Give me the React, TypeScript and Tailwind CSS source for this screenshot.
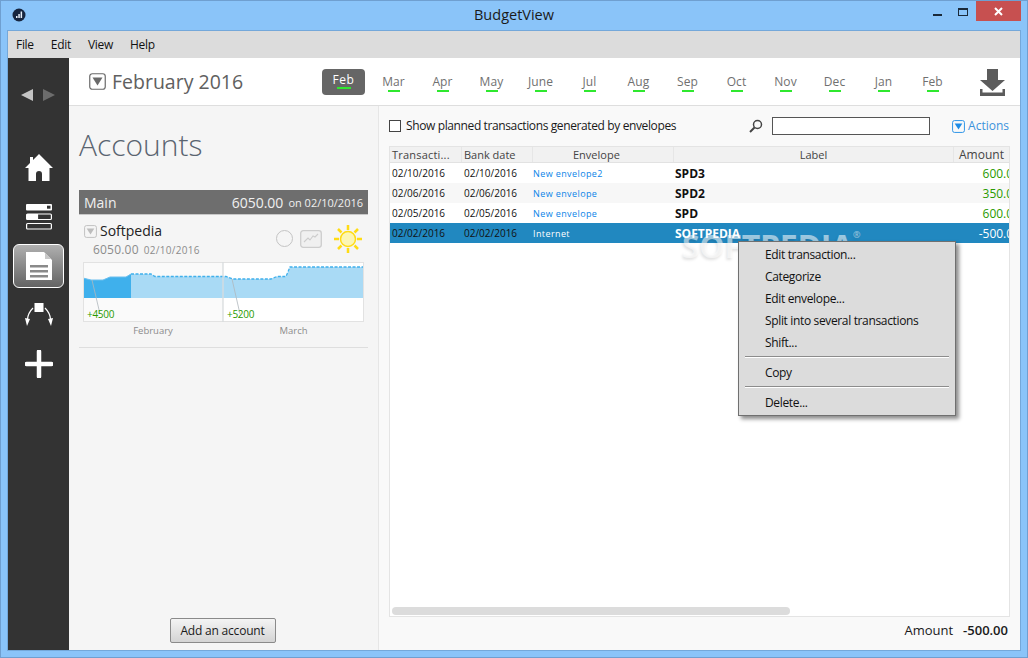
import React from "react";

const months = ["Mar","Apr","May","June","Jul","Aug","Sep","Oct","Nov","Dec","Jan","Feb"];
const rows = [
  { d: "02/10/2016", b: "02/10/2016", e: "New envelope2", l: "SPD3", a: "600.00", bg: "bg-white" },
  { d: "02/06/2016", b: "02/06/2016", e: "New envelope", l: "SPD2", a: "350.00", bg: "bg-[#f7f7f7]" },
  { d: "02/05/2016", b: "02/05/2016", e: "New envelope", l: "SPD", a: "600.00", bg: "bg-white" },
];

function DownBox({ className }: { className: string }) {
  return (
    <svg viewBox="0 0 17 17" className={className}>
      <rect x="0.75" y="0.75" width="15.5" height="15.5" rx="2.5" fill="none" stroke="currentColor" strokeWidth="1.2" />
      <path d="M3.5 4.5h10l-5 8z" fill="currentColor" />
    </svg>
  );
}

export default function App() {
  return (
    <div className="relative w-[1028px] h-[658px] flex flex-col bg-[#8ac4f9] border border-[#6f9fd0] overflow-hidden text-black font-['Open_Sans',sans-serif]">
      {/* Title bar */}
      <div className="relative h-[29px] shrink-0 flex items-center justify-center">
        <svg viewBox="0 0 14 14" className="absolute left-[11px] top-[7px] w-[14px] h-[14px]">
          <circle cx="7" cy="7" r="6.5" fill="#16253f" />
          <path d="M4 10V8h1.5v2zM6.3 10V6h1.5v4zM8.6 10V3.5h1.5V10z" fill="#e8f0fa" />
        </svg>
        <span className="text-[14.500px] leading-none text-[#1a1a1a]">BudgetView</span>
        <div className="absolute left-[932px] top-[13px] w-[9px] h-[2px] bg-[#1a2a3a]" />
        <div className="absolute left-[957px] top-[7px] w-[10px] h-[8px] border border-[#1a2a3a] border-t-2" />
        <div className="absolute left-[975px] top-0 w-[45px] h-[20px] bg-[#c75050] flex items-center justify-center">
          <svg viewBox="0 0 9 9" className="w-[9px] h-[9px]"><path d="M1 1l7 7M8 1l-7 7" stroke="#fff" strokeWidth="2" /></svg>
        </div>
      </div>

      {/* Client area */}
      <div className="flex-1 mx-[6px] mb-[6px] flex flex-col border border-[#74a8da] min-h-0">
        {/* Menu */}
        <div className="h-[27px] shrink-0 bg-[#dcdcdc] flex items-center pl-[8px] gap-[17px] text-[12px] tracking-[-0.3px] text-[#111]">
          <span>File</span><span>Edit</span><span>View</span><span>Help</span>
        </div>

        <div className="flex-1 flex min-h-0">
          {/* Sidebar */}
          <div className="w-[61px] shrink-0 bg-[#333333] flex flex-col items-center">
            <div className="h-[74px] flex items-center gap-[10px] pr-[1px]">
              <svg viewBox="0 0 12 12" className="w-[12px] h-[12px]"><path d="M12 0v12L0 6z" fill="#c4c4c4" /></svg>
              <svg viewBox="0 0 12 12" className="w-[12px] h-[12px]"><path d="M0 0v12l12-6z" fill="#6c6c6c" /></svg>
            </div>
            <div className="h-[11px]" />
            <div className="h-[49px] flex items-center justify-center">
              <svg viewBox="0 0 28 27" className="w-[28px] h-[27px]">
                <path d="M14 0L28 14h-3.5v13H17v-7a3 3 0 0 0-6 0v7H3.500V14H0L5 9V3h3v3z" fill="#fff" />
              </svg>
            </div>
            <div className="h-[49px] flex items-center justify-center">
              <svg viewBox="0 0 26 26" className="w-[26px] h-[26px]">
                <rect x="0" y="0" width="26" height="6.500" rx="1" fill="#fff" />
                <rect x="21" y="1.700" width="3.500" height="3" fill="#333" />
                <rect x="0.600" y="10" width="24.800" height="5.500" rx="1" fill="#333" stroke="#fff" strokeWidth="1.200" />
                <rect x="0.600" y="10" width="11.500" height="5.500" fill="#fff" />
                <rect x="0.600" y="19.500" width="24.800" height="5.500" rx="1" fill="none" stroke="#fff" strokeWidth="1.200" />
              </svg>
            </div>
            <div className="h-[49px] flex items-center justify-center">
              <div className="w-[51px] h-[44px] rounded-[6px] border border-white bg-gradient-to-b from-[#b0b0b0] to-[#646464] flex items-center justify-center">
                <svg viewBox="0 0 26 28" className="w-[26px] h-[28px]">
                  <path d="M0 0h18l8 8v20H0z" fill="#fff" />
                  <path d="M19 1l6 6h-6z" fill="#c8c8c8" />
                  <path d="M4 13h18v2.500H4zM4 18h18v2.500H4zM4 23h18v2.500H4z" fill="#8a8a8a" />
                </svg>
              </div>
            </div>
            <div className="h-[49px] flex items-center justify-center">
              <svg viewBox="0 0 28 24" className="w-[28px] h-[24px]">
                <rect x="9.500" y="0" width="9" height="9" fill="#fff" />
                <path d="M8 5C5 8 3 11 2.500 16M20 5c3 3 5 6 5.500 11" fill="none" stroke="#fff" strokeWidth="1.200" />
                <path d="M0 15l5 1-3 7zM28 15l-5 1 3 7z" fill="#fff" />
              </svg>
            </div>
            <div className="h-[49px] flex items-center justify-center">
              <svg viewBox="0 0 28 28" className="w-[28px] h-[28px]">
                <path d="M14 1.500v25M1.500 14h25" stroke="#fff" strokeWidth="4.500" strokeLinecap="round" />
              </svg>
            </div>
          </div>

          <div className="flex-1 flex flex-col min-w-0">
            {/* Header */}
            <div className="h-[48px] shrink-0 bg-white border-b border-[#dedede] flex items-center relative">
              <DownBox className="ml-[20px] w-[17px] h-[17px] text-[#6a6a6a]" />
              <span className="ml-[6px] w-[210px] pt-[1px] text-[19.500px] leading-none text-[#606060]">February 2016</span>
              <div className="w-[43px] h-[26px] mr-[4px] rounded-[4px] bg-[#666666] flex flex-col items-center pt-[3px] text-[12px] leading-[16px] text-white tracking-[0.5px]">
                <span>Feb</span>
                <span className="w-[14px] h-[2px] -mt-[0.5px] bg-[#2fe82f]" />
              </div>
              {months.map((m, i) => (
                <div key={i} className="w-[49px] shrink-0 flex flex-col items-center text-[12px] leading-[16px] text-[#707070] tracking-[0.1px] pt-[2px]">
                  <span>{m}</span>
                  <span className="w-[12px] h-[2px] bg-[#2fe82f]" />
                </div>
              ))}
              <svg viewBox="0 0 25 27" className="absolute right-[15px] top-[11px] w-[25px] h-[27px]">
                <path d="M7 0h11v11h7L12.500 22 0 11h7z" fill="#5c5c5c" />
                <path d="M0 20h2.500v3.500h20V20H25v7H0z" fill="#5c5c5c" />
              </svg>
            </div>

            <div className="flex-1 flex min-h-0">
              {/* Left panel */}
              <div className="w-[310px] shrink-0 bg-[#f5f5f5] border-r border-[#e6e6e6] px-[10px] flex flex-col">
                <div className="text-[30px] leading-[40px] font-light text-[#5a6470] mt-[19px]">Accounts</div>
                <div className="h-[25px] mt-[25px] bg-[#6e6e6e] border-b border-[#c8c8c8] text-[#f0f0f0] flex items-center px-[5px]">
                  <span className="text-[14px]">Main</span>
                  <span className="ml-auto text-[14px]">6050.00</span>
                  <span className="ml-[5px] text-[11px] pt-[2px]">on 02/10/2016</span>
                </div>
                <div className="h-[47px] relative flex flex-col">
                  <div className="flex items-center pl-[5px] pt-[6px]">
                    <DownBox className="w-[13px] h-[13px] text-[#bdbdbd]" />
                    <span className="ml-[3px] text-[14px] leading-[20px] text-[#222]">Softpedia</span>
                  </div>
                  <div className="pl-[14px] flex items-baseline text-[#8c8c8c]">
                    <span className="text-[12px] leading-[17px] tracking-[0.2px]">6050.00</span>
                    <span className="ml-[5px] text-[10px] tracking-[0.3px]">02/10/2016</span>
                  </div>
                  <div className="absolute left-[197px] top-[15px] w-[17px] h-[17px] rounded-full border-[1.5px] border-[#c4c4c4]" />
                  <svg viewBox="0 0 22 18" className="absolute left-[221px] top-[15px] w-[22px] h-[18px]">
                    <rect x="0.700" y="0.700" width="20.600" height="16.600" rx="2.500" fill="#f0f0f0" stroke="#cdcdcd" strokeWidth="1.300" />
                    <path d="M4 12l4-4 2 2 3-4 2 1 3-3" fill="none" stroke="#cdcdcd" strokeWidth="1.100" />
                  </svg>
                  <svg viewBox="0 0 30 30" className="absolute left-[254px] top-[9px] w-[30px] h-[30px]">
                    <circle cx="15" cy="15" r="7.500" fill="#fcf6b4" stroke="#ffdc14" strokeWidth="1.500" />
                    <path d="M15 1v5M15 24v5M1 15h5M24 15h5M5 5l3.500 3.500M21.500 21.500L25 25M25 5l-3.500 3.500M8.500 21.500L5 25" stroke="#ffdc14" strokeWidth="2.500" />
                  </svg>
                </div>
                {/* Chart */}
                <div className="relative ml-[4px] w-[281px] h-[60px]">
                  <svg viewBox="0 0 281 60" className="w-[281px] h-[60px]">
                    <rect x="0" y="0" width="140" height="60" fill="#fafafa" />
                    <rect x="140" y="0" width="141" height="60" fill="#ffffff" />
                    <path d="M0 16L8 18H20L27 15H43L48 12H68L72 14.500H143L150 17H188L194 14.500H203L207 5H281V36H0z" fill="#a9daf5" />
                    <path d="M0 16L8 18H20L27 15H43L48 12V36H0z" fill="#3fb0ec" />
                    <path d="M0 16L8 18H20L27 15H43L48 12" fill="none" stroke="#6cbfee" strokeWidth="1" />
                    <path d="M48 12H68L72 14.500H143L150 17H188L194 14.500H203L207 5H281" fill="none" stroke="#3fb0ec" strokeWidth="1.300" strokeDasharray="3 1.500" />
                    <path d="M9 18L17 52M149 17L157 52" stroke="#b0b8bc" strokeWidth="0.800" fill="none" />
                    <rect x="0.500" y="0.500" width="280" height="59" fill="none" stroke="#e2e2e2" />
                    <path d="M140 0V60" stroke="#d8dcde" strokeWidth="1.300" />
                  </svg>
                  <span className="absolute left-[4px] top-[45px] text-[10px] leading-[14px] tracking-[-0.3px] text-[#2a9a00]">+4500</span>
                  <span className="absolute left-[144px] top-[45px] text-[10px] leading-[14px] tracking-[-0.3px] text-[#2a9a00]">+5200</span>
                </div>
                <div className="flex ml-[4px] w-[281px] text-[9.500px] leading-[18px] text-[#8c8c8c]">
                  <span className="w-[140px] text-center">February</span>
                  <span className="w-[141px] text-center">March</span>
                </div>
                <div className="h-px bg-[#dedede] mt-[7px]" />
                <div className="mt-auto mb-[7px] self-center mr-[2px]">
                  <div className="w-[106px] h-[25px] rounded-[2px] border border-[#8a8a8a] bg-gradient-to-b from-[#f4f4f4] to-[#d4d4d4] flex items-center justify-center text-[12px] tracking-[-0.2px] text-[#1a1a1a]">
                    Add an account
                  </div>
                </div>
              </div>

              {/* Right panel */}
              <div className="flex-1 min-w-0 bg-[#f9f9f9] px-[10px] flex flex-col">
                <div className="h-[40px] shrink-0 flex items-center text-[12px] text-[#1a1a1a]">
                  <span className="w-[12px] h-[12px] border border-[#444] bg-white" />
                  <span className="ml-[5px] tracking-[-0.38px] whitespace-nowrap">Show planned transactions generated by envelopes</span>
                  <svg viewBox="0 0 14 14" className="ml-auto w-[14px] h-[14px]">
                    <circle cx="8.500" cy="5.500" r="4" fill="none" stroke="#444" strokeWidth="1.500" />
                    <path d="M5.500 8.500L1 13" stroke="#444" strokeWidth="2" />
                  </svg>
                  <div className="ml-[9px] w-[158px] h-[18px] bg-white border border-[#555]" />
                  <DownBox className="ml-[22px] w-[13px] h-[15px] text-[#1e8ce6]" />
                  <span className="ml-[3px] mr-[1px] text-[#3c93dc] whitespace-nowrap">Actions</span>
                </div>

                <div className="relative h-[471px] w-[621px] bg-white border border-[#e4e4e4] overflow-hidden">
                  <div className="flex h-[16px] bg-[#f1f1f1] border-b border-[#e2e2e2] text-[11px] leading-[15px] text-[#444] whitespace-nowrap">
                    <span className="w-[72px] shrink-0 pl-[2px] border-r border-[#e6e6e6] overflow-hidden tracking-[0.2px]">Transacti...</span>
                    <span className="w-[71px] shrink-0 pl-[2px] border-r border-[#e6e6e6]">Bank date</span>
                    <span className="w-[141px] shrink-0 pl-[40px] border-r border-[#e6e6e6]">Envelope</span>
                    <span className="w-[280px] shrink-0 text-center border-r border-[#e6e6e6]">Label</span>
                    <span className="w-[60px] shrink-0 pl-[5px] text-[12px]">Amount</span>
                  </div>
                  {rows.map((r, i) => (
                    <div key={i} className={`flex h-[20px] pt-[1px] items-center whitespace-nowrap ${r.bg}`}>
                      <span className="w-[72px] shrink-0 pl-[2px] text-[10px] text-[#111]">{r.d}</span>
                      <span className="w-[71px] shrink-0 pl-[2px] text-[10px] text-[#111]">{r.b}</span>
                      <span className="w-[141px] shrink-0 text-[9px] tracking-[0.4px] text-[#0a84e8]">{r.e}</span>
                      <span className="w-[280px] shrink-0 pl-[1px] text-[12px] font-bold text-[#111]">{r.l}</span>
                      <span className="w-[69px] shrink-0 text-right text-[12px] text-[#2a9a00] pr-[3px]">{r.a}</span>
                    </div>
                  ))}
                  <div className="flex h-[20px] pt-[1px] items-center whitespace-nowrap bg-[#2188c0] text-white">
                    <span className="w-[72px] shrink-0 pl-[2px] text-[10px] text-[#111]">02/02/2016</span>
                    <span className="w-[71px] shrink-0 pl-[2px] text-[10px] text-[#111]">02/02/2016</span>
                    <span className="w-[141px] shrink-0 text-[9px] tracking-[0.4px]">Internet</span>
                    <span className="w-[280px] shrink-0 pl-[1px] text-[12px] font-bold">SOFTPEDIA</span>
                    <span className="w-[69px] shrink-0 text-right text-[12px] pr-[3px]">-500.00</span>
                  </div>
                  <div className="absolute left-[2px] bottom-[1px] w-[398px] h-[8px] rounded-[4px] bg-[#dcdcdc]" />
                </div>

                <div className="flex-1 flex items-center justify-end pr-[2px] pb-[5px] text-[13px] text-[#1a1a1a]">
                  <span>Amount</span>
                  <span className="ml-[10px] font-semibold">-500.00</span>
                </div>
              </div>
            </div>
          </div>
        </div>
      </div>

      {/* Watermark */}
      <div className="absolute left-[681px] top-[225px] flex items-start text-white/55 [text-shadow:-1px_2px_3px_rgba(0,0,0,0.12)]">
        <span className="text-[32px] leading-[40px] font-bold tracking-[-0.3px]">SOFTPEDIA</span>
        <span className="text-[9px] leading-[12px] mt-[3px]">®</span>
      </div>

      {/* Context menu */}
      <div className="absolute left-[737px] top-[240px] w-[218px] h-[175px] bg-[#dcdcdc] border border-[#707070] shadow-[3px_3px_4px_rgba(0,0,0,0.45)] pt-[2px] text-[12px] leading-[22px] tracking-[-0.35px] text-[#111]">
        <div className="pl-[26px]">Edit transaction...</div>
        <div className="pl-[26px]">Categorize</div>
        <div className="pl-[26px]">Edit envelope...</div>
        <div className="pl-[26px]">Split into several transactions</div>
        <div className="pl-[26px]">Shift...</div>
        <div className="mx-[6px] h-[2px] bg-[#8c8c8c] border-b border-white mt-[2px]" />
        <div className="pl-[26px] mt-[4px]">Copy</div>
        <div className="mx-[6px] h-[2px] bg-[#8c8c8c] border-b border-white mt-[2px]" />
        <div className="pl-[26px] mt-[4px]">Delete...</div>
      </div>
    </div>
  );
}
